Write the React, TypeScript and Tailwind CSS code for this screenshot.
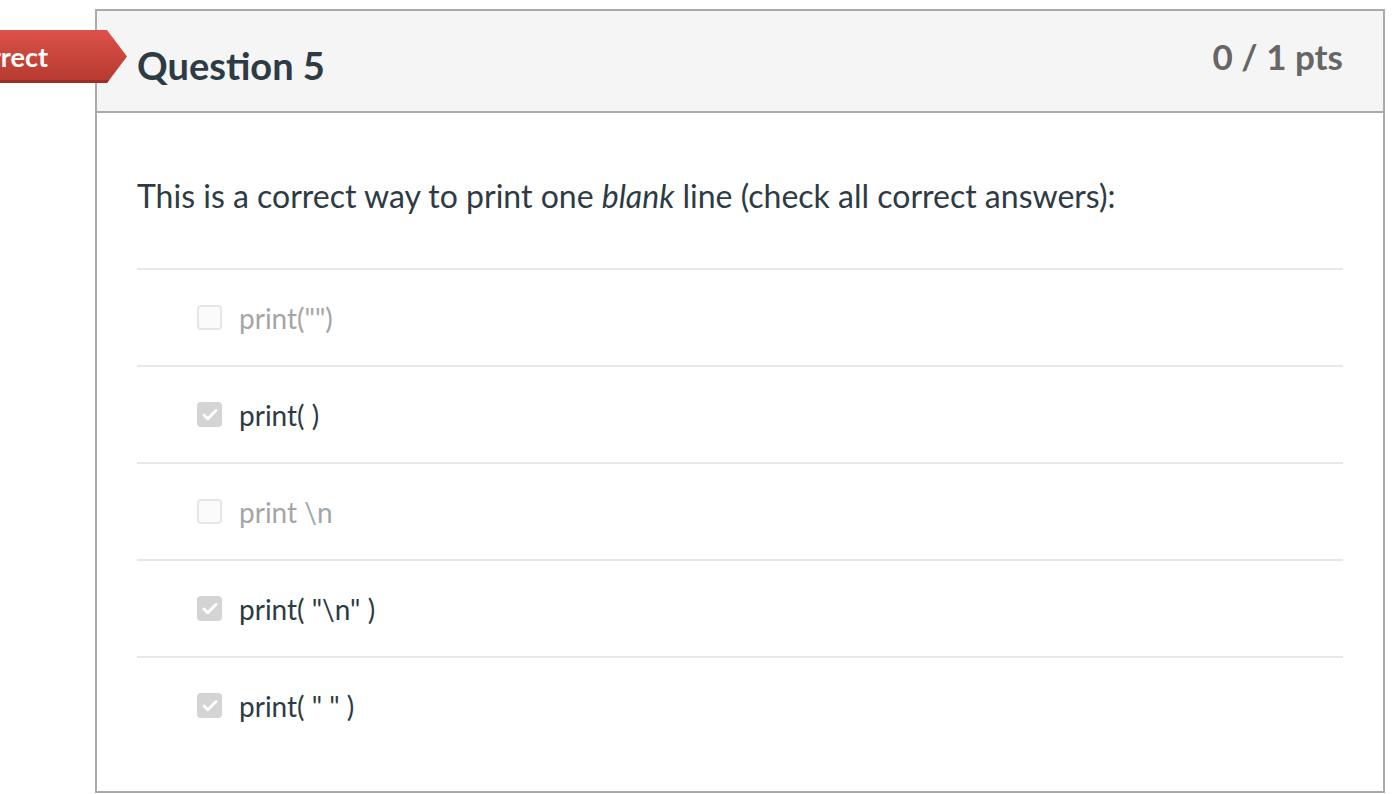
import { Check } from "lucide-react";

type Answer = { text: string; checked: boolean };

const answers: Answer[] = [
  { text: 'print("")', checked: false },
  { text: "print( )", checked: true },
  { text: "print \\n", checked: false },
  { text: 'print( "\\n" )', checked: true },
  { text: 'print( " " )', checked: true },
];

function Box({ checked }: { checked: boolean }) {
  if (checked) {
    return (
      <div className="flex h-[25px] w-[25px] shrink-0 items-center justify-center rounded-[4px] bg-[#d4d4d4]">
        <Check className="h-[18px] w-[18px] text-white" strokeWidth={4} />
      </div>
    );
  }
  return <div className="h-[25px] w-[25px] shrink-0 rounded-[4px] border-2 border-[#e6e6e6] bg-[#fbfbfb]" />;
}

export default function App() {
  return (
    <div className="relative h-[794px] w-[1396px] overflow-hidden bg-white pl-[95px] pr-[11px] pt-[9px] font-['Lato','Noto_Sans',sans-serif]">
      <div className="flex h-[784px] flex-col border-2 border-[#aaaaaa]">
        <div className="flex h-[102px] shrink-0 items-start justify-between border-b-2 border-[#aaaaaa] bg-[#f5f5f5] px-[40px]">
          <h2 className="mt-[35px] text-[38px] font-bold leading-[38px] text-[#2d3b45]">Question 5</h2>
          <div className="mt-[28px] text-[35px] font-bold leading-[35px] text-[#666666]">0 / 1 pts</div>
        </div>

        <div className="px-[40px] pt-[62px]">
          <p className="text-[32px] leading-[42px] text-[#2d3b45]">
            This is a correct way to print one <em>blank</em> line (check all correct answers):
          </p>

          <div className="mt-[51px]">
            {answers.map((a) => (
              <div
                key={a.text}
                className="flex h-[97px] items-center border-t-2 border-[#e8e8e8] pl-[60px]"
              >
                <Box checked={a.checked} />
                <span
                  className={
                    "ml-[17px] whitespace-pre text-[28px] leading-[30px] " +
                    (a.checked ? "text-[#2d3b45]" : "text-[#a3a6a9]")
                  }
                >
                  {a.text}
                </span>
              </div>
            ))}
          </div>
        </div>
      </div>

      {/* incorrect flag */}
      <div className="absolute left-0 top-[30px] h-[53px] w-[127px] overflow-hidden bg-gradient-to-b from-[#dc524a] to-[#b5382e] shadow-[inset_0_-3px_0_#9c2e26] [clip-path:polygon(0_0,107px_0,127px_50%,107px_100%,0_100%)]">
        <span className="absolute right-[79px] top-[12px] whitespace-nowrap text-[27px] font-bold leading-[30px] text-white">
          Incorrect
        </span>
      </div>
    </div>
  );
}
